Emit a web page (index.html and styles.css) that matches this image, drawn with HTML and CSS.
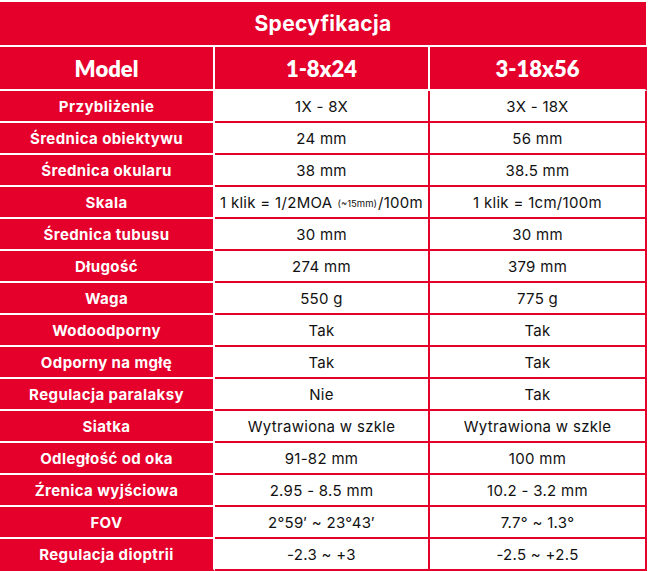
FILE: index.html
```html
<!DOCTYPE html>
<html lang="pl">
<head>
<meta charset="utf-8">
<title>Specyfikacja</title>
<link rel="stylesheet" href="styles.css">
</head>
<body>
<div class="spec">
  <div class="title">Specyfikacja</div>
  <div class="head">Model</div>
  <div class="head">1-8x24</div>
  <div class="head last">3-18x56</div>

  <div class="lab">Przybliżenie</div><div class="val">1X - 8X</div><div class="val">3X - 18X</div>
  <div class="lab">Średnica obiektywu</div><div class="val">24 mm</div><div class="val">56 mm</div>
  <div class="lab">Średnica okularu</div><div class="val">38 mm</div><div class="val">38.5 mm</div>
  <div class="lab">Skala</div><div class="val">1 klik = 1/2MOA <small>(~15mm)</small>/100m</div><div class="val">1 klik = 1cm/100m</div>
  <div class="lab">Średnica tubusu</div><div class="val">30 mm</div><div class="val">30 mm</div>
  <div class="lab">Długość</div><div class="val">274 mm</div><div class="val">379 mm</div>
  <div class="lab">Waga</div><div class="val">550 g</div><div class="val">775 g</div>
  <div class="lab">Wodoodporny</div><div class="val">Tak</div><div class="val">Tak</div>
  <div class="lab">Odporny na mgłę</div><div class="val">Tak</div><div class="val">Tak</div>
  <div class="lab">Regulacja paralaksy</div><div class="val">Nie</div><div class="val">Tak</div>
  <div class="lab">Siatka</div><div class="val">Wytrawiona w szkle</div><div class="val">Wytrawiona w szkle</div>
  <div class="lab">Odległość od oka</div><div class="val">91-82 mm</div><div class="val">100 mm</div>
  <div class="lab">Źrenica wyjściowa</div><div class="val">2.95 - 8.5 mm</div><div class="val">10.2 - 3.2 mm</div>
  <div class="lab">FOV</div><div class="val">2°59′ ~ 23°43′</div><div class="val">7.7° ~ 1.3°</div>
  <div class="lab end">Regulacja dioptrii</div><div class="val">-2.3 ~ +3</div><div class="val">-2.5 ~ +2.5</div>
</div>
</body>
</html>
```
FILE: styles.css
```css
html, body {
  margin: 0;
  padding: 0;
  background: #ffffff;
}
body {
  padding-top: 2px;
}
.spec {
  display: grid;
  grid-template-columns: 215px 215px 217px;
  width: 647px;
  font-family: "Inter", "Noto Sans", sans-serif;
  color: #111111;
}
.title {
  grid-column: 1 / 4;
  height: 43px;
  border-bottom: 2px solid #ffffff;
  background: #e4002b;
  color: #ffffff;
  font-weight: 700;
  font-size: 21px;
  letter-spacing: 0.3px;
  display: flex;
  align-items: center;
  justify-content: center;
  margin-right: 1px;
}
.head {
  height: 42px;
  background: #e4002b;
  color: #ffffff;
  font-family: "Lato", "Noto Sans", sans-serif;
  font-weight: 800;
  font-size: 22px;
  display: flex;
  align-items: center;
  justify-content: center;
  border-right: 2px solid #ffffff;
  border-bottom: 2px solid #ffffff;
}
.head.last {
  border-right: 2px solid #e4002b;
}
.lab, .val {
  height: 30px;
  display: flex;
  align-items: center;
  justify-content: center;
  white-space: nowrap;
}
.lab {
  background: #e4002b;
  color: #ffffff;
  font-weight: 700;
  font-size: 15px;
  letter-spacing: 0.4px;
  border-right: 2px solid #ffffff;
  border-bottom: 2px solid #ffffff;
}
.lab.end {
  border-bottom-color: #e4002b;
}
.val {
  background: #ffffff;
  font-size: 15px;
  letter-spacing: 0.3px;
  border-right: 2px solid #e4002b;
  border-bottom: 2px solid #e4002b;
}
.val small {
  font-size: 9.5px;
  letter-spacing: 0;
  margin: 0 1px 0 5px;
  position: relative;
  top: 1px;
}
```
